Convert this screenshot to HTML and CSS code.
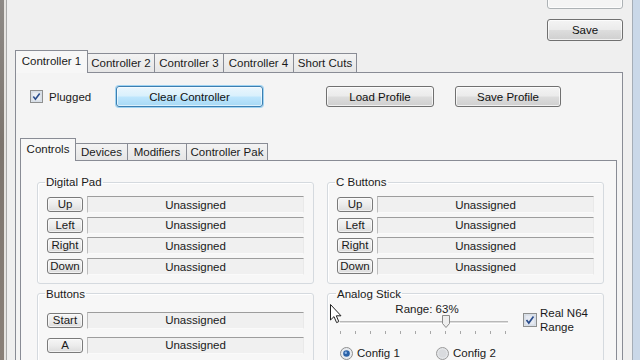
FILE: index.html
```html
<!DOCTYPE html>
<html>
<head>
<meta charset="utf-8">
<link rel="stylesheet" href="styles.css">
</head>
<body>
<div class="screen">
  <div class="desk"></div>
  <div class="frame-l"></div>
  <div class="window">
    <div class="top-buttons">
      <div class="btn btn-big btn-disabled"></div>
      <div class="btn btn-big btn-save">Save</div>
    </div>
    <div class="tabs outer-tabs">
      <div class="tab tab-sel w-c1">Controller 1</div>
      <div class="tab w-c2">Controller 2</div>
      <div class="tab w-c3">Controller 3</div>
      <div class="tab w-c4">Controller 4</div>
      <div class="tab w-sc">Short Cuts</div>
    </div>
    <div class="outer-panel">
      <div class="action-row">
        <div class="plug">
          <svg class="check" width="13" height="13" viewBox="0 0 13 13"><rect x="0.5" y="0.5" width="12" height="12" fill="#dfe6ee" stroke="#8e8f8f"/><rect x="2" y="2" width="9" height="9" fill="#eaeef3" stroke="#c5ccd5" stroke-width="0.6"/><path d="M3.3 6.6 L5.4 9.2 L9.7 3.4" fill="none" stroke="#2a4d8c" stroke-width="1.6"/></svg>
          <span class="plug-label">Plugged</span>
        </div>
        <div class="btn btn-focus w-clear">Clear Controller</div>
        <div class="btn w-load">Load Profile</div>
        <div class="btn w-saveprof">Save Profile</div>
      </div>
      <div class="inner">
        <div class="tabs inner-tabs">
          <div class="tab tab-sel w-ctl">Controls</div>
          <div class="tab w-dev">Devices</div>
          <div class="tab w-mod">Modifiers</div>
          <div class="tab w-pak">Controller Pak</div>
        </div>
        <div class="inner-panel">
          <div class="groups">
            <fieldset class="grp grp-pad">
              <legend>Digital Pad</legend>
              <div class="map-row"><div class="kbtn">Up</div><div class="field">Unassigned</div></div>
              <div class="map-row"><div class="kbtn">Left</div><div class="field">Unassigned</div></div>
              <div class="map-row"><div class="kbtn">Right</div><div class="field">Unassigned</div></div>
              <div class="map-row"><div class="kbtn">Down</div><div class="field">Unassigned</div></div>
            </fieldset>
            <fieldset class="grp grp-pad">
              <legend>C Buttons</legend>
              <div class="map-row"><div class="kbtn">Up</div><div class="field">Unassigned</div></div>
              <div class="map-row"><div class="kbtn">Left</div><div class="field">Unassigned</div></div>
              <div class="map-row"><div class="kbtn">Right</div><div class="field">Unassigned</div></div>
              <div class="map-row"><div class="kbtn">Down</div><div class="field">Unassigned</div></div>
            </fieldset>
            <fieldset class="grp grp-btns">
              <legend>Buttons</legend>
              <div class="map-row map-row-wide"><div class="kbtn">Start</div><div class="field">Unassigned</div></div>
              <div class="map-row map-row-wide"><div class="kbtn">A</div><div class="field">Unassigned</div></div>
              <div class="map-row map-row-wide"><div class="kbtn"></div><div class="field"></div></div>
            </fieldset>
            <fieldset class="grp grp-analog">
              <legend>Analog Stick</legend>
              <div class="analog-top">
                <div class="slider">
                  <div class="range-label">Range: 63%</div>
                  <div class="track"></div>
                  <svg class="thumb" width="8" height="13" viewBox="0 0 8 13"><path d="M0.5 0.5 H7.5 V8.5 L4 12.5 L0.5 8.5 Z" fill="#eeeeee" stroke="#8a8a8a"/></svg>
                  <div class="ticks">
                    <i></i><i></i><i></i><i></i><i></i><i></i><i></i><i></i><i></i><i></i><i></i><i></i>
                  </div>
                </div>
                <div class="real">
                  <svg class="check" width="14" height="14" viewBox="0 0 14 14"><rect x="0.5" y="0.5" width="13" height="13" fill="#dfe6ee" stroke="#8e8f8f"/><rect x="2" y="2" width="10" height="10" fill="#e6eaf2" stroke="#c5ccd5" stroke-width="0.6"/><path d="M3.5 7 L5.8 10 L10.5 3.6" fill="none" stroke="#2a4d8c" stroke-width="1.7"/></svg>
                  <div class="real-label">Real N64<br>Range</div>
                </div>
              </div>
              <div class="radios">
                <div class="radio-item r1">
                  <svg width="13" height="13" viewBox="0 0 13 13"><circle cx="6.5" cy="6.5" r="6" fill="#e8ebef" stroke="#8e8f8f"/><circle cx="6.5" cy="6.5" r="3.3" fill="#2a62a8"/><circle cx="5.8" cy="5.7" r="1.2" fill="#8fb6e6"/></svg>
                  <span>Config 1</span>
                </div>
                <div class="radio-item">
                  <svg width="13" height="13" viewBox="0 0 13 13"><circle cx="6.5" cy="6.5" r="6" fill="#e4e6e9" stroke="#9a9a9a"/><circle cx="6.5" cy="6.5" r="4" fill="#d9dbde"/></svg>
                  <span>Config 2</span>
                </div>
              </div>
            </fieldset>
          </div>
        </div>
      </div>
    </div>
  </div>
  <div class="frame-r"></div>
  <svg class="cursor" width="12" height="20" viewBox="0 0 12 20"><path d="M0.5 0.5 L0.5 16 L4 12.6 L6.6 18.6 L8.8 17.6 L6.3 11.8 L11 11.8 Z" fill="#ffffff" stroke="#222222" stroke-width="1" stroke-linejoin="round"/></svg>
</div>
</body>
</html>
```

FILE: styles.css
```css
* { box-sizing: border-box; }
html, body { margin: 0; padding: 0; }
body {
  width: 640px;
  height: 360px;
  overflow: hidden;
  background: #eeeeee;
  font-family: "Liberation Sans", Arial, sans-serif;
  font-size: 11.5px;
  color: #1a1a1a;
}
.screen {
  position: relative;
  display: flex;
  width: 640px;
  height: 360px;
  overflow: hidden;
}
.desk {
  width: 4px;
  background: linear-gradient(to bottom, #8e8a86, #7d756e 40%, #8a8078);
}
.frame-l {
  width: 3px;
  background: #e6e4e1;
  border-right: 1px solid #a9a9a9;
}
.frame-r {
  width: 8px;
  background: #cad8e8;
  border-left: 1px solid #a5adb6;
}
.window {
  flex: 1;
  display: flex;
  flex-direction: column;
  padding: 0 9px 0 8px;
  background: #efefef;
  min-width: 0;
}
.top-buttons {
  display: flex;
  flex-direction: column;
  align-items: flex-end;
  gap: 10px;
  margin-top: -13px;
}
.btn {
  height: 21px;
  display: flex;
  align-items: center;
  justify-content: center;
  border: 1px solid #707070;
  border-radius: 3px;
  background: linear-gradient(to bottom, #f4f4f4 0%, #ebebeb 48%, #dddddd 52%, #cfcfcf 100%);
  box-shadow: inset 0 0 0 1px rgba(255,255,255,0.7);
  color: #111;
  white-space: nowrap;
}
.btn-big { width: 76px; height: 22px; }
.btn-disabled {
  border-color: #adb2b5;
  background: #f4f4f4;
}
.btn-focus {
  border-color: #3c7fb1;
  background: linear-gradient(to bottom, #eaf6fd 0%, #d9f0fc 48%, #bee6fd 52%, #a7d9f5 100%);
  box-shadow: inset 0 0 0 1px rgba(255,255,255,0.6), 0 0 0 1px #9fd3f2;
}
.tabs {
  display: flex;
  align-items: flex-end;
}
.outer-tabs { height: 23px; margin-top: 8px; }
.tab {
  position: relative;
  height: 19px;
  display: flex;
  align-items: center;
  justify-content: center;
  border: 1px solid #898c95;
  border-bottom: none;
  margin-left: -1px;
  background: linear-gradient(to bottom, #f3f3f3, #e6e6e6);
  white-space: nowrap;
  color: #1a1a1a;
}
.tab:first-child { margin-left: 0; }
.tab-sel {
  height: 23px;
  background: #f7f7f7;
  z-index: 2;
  margin-bottom: -1px;
  padding-bottom: 3px;
}
.w-c1 { width: 73px; }
.w-c2 { width: 68px; }
.w-c3 { width: 70px; }
.w-c4 { width: 71px; }
.w-sc { width: 64px; }
.outer-panel {
  flex: 1;
  border: 1px solid #898c95;
  border-bottom: none;
  background: #f4f4f4;
  padding: 13px 5px 0 4px;
  display: flex;
  flex-direction: column;
  min-height: 0;
}
.action-row {
  display: flex;
  align-items: center;
  height: 21px;
  margin-left: 10px;
}
.plug {
  width: 86px;
  display: flex;
  align-items: center;
}
.check { display: block; flex: none; }
.plug-label { margin-left: 6px; }
.w-clear { width: 147px; }
.w-load { width: 108px; margin-left: 63px; }
.w-saveprof { width: 106px; margin-left: 21px; }
.inner {
  flex: 1;
  display: flex;
  flex-direction: column;
  margin-top: 31px;
  min-height: 0;
}
.inner-tabs { height: 22px; }
.inner-tabs .tab { height: 17px; }
.inner-tabs .tab-sel { height: 23px; padding-bottom: 3px; }
.w-ctl { width: 56px; }
.w-dev { width: 53px; }
.w-mod { width: 60px; }
.w-pak { width: 82px; }
.inner-panel {
  flex: 1;
  border: 1px solid #898c95;
  border-bottom: none;
  background: #f7f7f7;
  padding: 14px 0 0 16px;
  min-height: 0;
}
.groups {
  display: grid;
  grid-template-columns: 277px 277px;
  column-gap: 13px;
  row-gap: 3px;
}
.grp {
  margin: 0;
  border: 1px solid #d5dadf;
  border-radius: 3px;
  box-shadow: inset 1px 1px 0 #ffffff;
  padding: 7px 9px 4px 9px;
  min-width: 0;
}
.grp legend {
  padding: 0 1px;
  margin-left: -2px;
  line-height: 14px;
  color: #1a1a1a;
}
.map-row {
  display: flex;
  align-items: center;
  gap: 4px;
  height: 17px;
  margin-bottom: 3.7px;
}
.map-row-wide { margin-bottom: 8px; }
.grp-btns { padding-top: 11px; }
.kbtn {
  width: 36px;
  height: 15px;
  flex: none;
  display: flex;
  align-items: center;
  justify-content: center;
  border: 1px solid #7a7a7a;
  border-radius: 3px;
  background: linear-gradient(to bottom, #f6f6f6 0%, #ececec 50%, #dcdcdc 100%);
  box-shadow: inset 0 0 0 1px rgba(255,255,255,0.6);
  font-size: 11.5px;
  line-height: 13px;
}
.field {
  flex: 1;
  height: 17px;
  display: flex;
  align-items: center;
  justify-content: center;
  background: #f0f0f0;
  border-top: 1px solid #9d9d9d;
  border-left: 1px solid #bdbdbd;
  border-right: 1px solid #e9e9e9;
  border-bottom: 1px solid #fafafa;
}
.grp-analog { padding: 1px 9px 0 10px; }
.analog-top {
  display: flex;
  align-items: flex-start;
}
.slider {
  position: relative;
  width: 174px;
  display: flex;
  flex-direction: column;
  align-items: stretch;
}
.range-label {
  text-align: center;
  line-height: 14px;
  margin-left: 4px;
}
.track {
  margin: 5px 4px 0 2px;
  height: 3px;
  border-top: 1px solid #b8b8b8;
  border-bottom: 1px solid #ffffff;
  background: #dcdcdc;
}
.thumb {
  position: absolute;
  left: 104px;
  top: 13px;
}
.ticks {
  display: flex;
  justify-content: space-between;
  margin: 7px 6px 0 2px;
  height: 3px;
}
.ticks i {
  display: block;
  width: 1px;
  height: 3px;
  background: #a8a8a8;
}
.real {
  display: flex;
  align-items: center;
  margin-left: 11px;
  margin-top: 4px;
}
.real-label {
  margin-left: 3px;
  line-height: 14px;
}
.radios {
  display: flex;
  align-items: center;
  margin-top: 13px;
  margin-left: 2px;
}
.radio-item {
  display: flex;
  align-items: center;
  gap: 4px;
}
.radio-item svg { display: block; }
.r1 { width: 96px; }
.cursor {
  position: absolute;
  left: 330px;
  top: 304px;
}
```
